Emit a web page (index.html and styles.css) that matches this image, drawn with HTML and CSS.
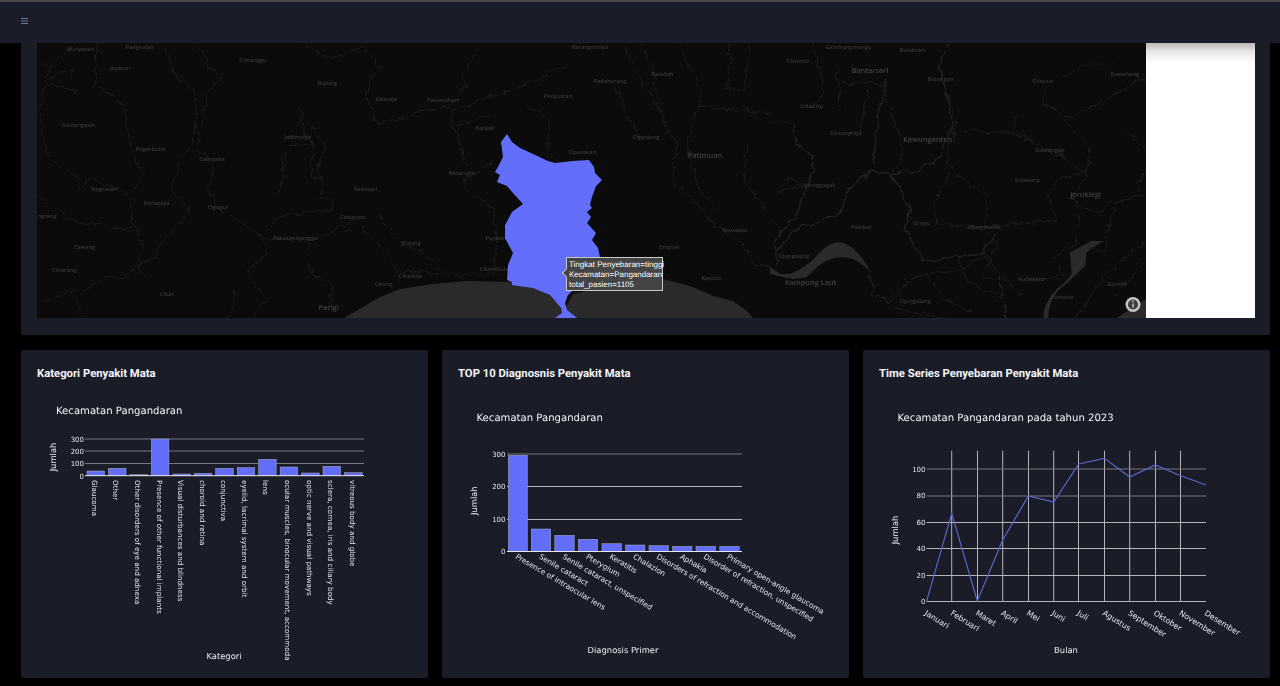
FILE: index.html
```html
<!DOCTYPE html>
<html lang="id">
<head>
<meta charset="utf-8">
<title>Dashboard Penyakit Mata</title>
<link rel="stylesheet" href="styles.css">
</head>
<body>
<header class="navbar">
  <svg class="burger" width="7" height="6" viewBox="0 0 7 6"><path d="M0 .5H7M0 3H7M0 5.5H7"/></svg>
</header>
<main class="content">
  <section class="card map-card">
    <div class="map-row">
      <div class="map">
        <svg class="map-svg" width="1109" height="275" viewBox="37 43 1109 275">
          <defs>
            <filter id="wiggle" x="-5%" y="-5%" width="110%" height="110%">
              <feTurbulence type="fractalNoise" baseFrequency="0.035" numOctaves="3" seed="4"/>
              <feDisplacementMap in="SourceGraphic" scale="26" xChannelSelector="R" yChannelSelector="G"/>
            </filter>
          </defs>
          <rect class="water-bg" x="37" y="43" width="1109" height="275"/>
          <g transform="translate(37 44) scale(.33333)">
            <path class="road" d="M0 62L40 62L90 25L100 12M40 62L30 100L8 180L12 260L40 350L120 395L130 430L170 400L190 420L240 430L280 470L285 530L300 570L320 605L300 650L265 700L210 700L140 740L100 740L20 775M40 100L70 85L105 80L100 105M40 115L125 145M180 0L175 125L260 180L280 300L300 370L320 385L290 440M385 10L410 90L470 140L480 240L470 295L430 340L405 440L455 490L440 520L400 570L360 610L360 640L300 660L330 710M480 0L520 70L555 100L515 140L500 200L490 260L480 320L530 360L510 440L540 490L600 530L680 580L690 630L630 680L660 730L690 770L650 815M790 190L795 240L830 310L820 400L860 410L855 450M815 230L865 310L840 380L860 410M780 240L830 300L760 305L735 340L745 410L720 450M0 460L60 500L110 530L200 545L230 560L280 550M100 740L135 790L135 820M670 590L720 520L790 505L885 500L885 465L840 465M680 580L815 590L815 680L890 725L880 790M830 590L950 525L1010 590L1060 630L1090 710M950 525L930 570M1030 510L1050 550L1110 590M1000 100L1035 70L980 10L880 45L790 0M1000 100L990 160L1020 235L1110 220M590 740L585 800L570 820"/>
            <text class="lbl" x="132" y="20">Mulyasari</text><text class="lbl" x="308" y="16">Pangkalan</text><text class="lbl" x="250" y="77">Jayasari</text><text class="lbl" x="648" y="53">Cimanggu</text><text class="lbl" x="871" y="123">Bojong</text><text class="lbl" x="1047" y="171">Kalipaja</text><text class="lbl" x="125" y="248">Sindangasih</text><text class="lbl" x="341" y="322">Pagerbumi</text><text class="lbl" x="782" y="285">Jadimulya</text><text class="lbl" x="525" y="352">Campaka</text><text class="lbl" x="203" y="442">Negrasari</text><text class="lbl" x="986" y="441">Sekosari</text><text class="lbl" x="359" y="482">Kertajaya</text><text class="lbl" x="543" y="496">Cigugur</text><text class="lbl" x="948" y="525">Cintaratu</text><text class="lbl" x="775" y="588">Parakanmanggu</text><text class="lbl" x="143" y="615">Tawang</text><text class="lbl" x="82" y="685">Ciherang</text><text class="lbl" x="390" y="755">Cikar</text><text class="lbl-lg" x="875" y="798">Parigi</text><text class="lbl" x="1040" y="725">Citeng</text><text class="lbl" x="30" y="523">ngreng</text>
          </g>
          <g transform="translate(400 44) scale(.33333)">
            <path class="road" d="M230 30L190 90L200 130L150 190L60 200L0 230M150 190L160 240L180 300L200 370M500 60L350 130L150 200M380 185L450 230L440 330L470 350M160 250L270 210M280 350L200 400L190 430L280 490L290 590L280 690M0 600L60 620L130 680M670 0L700 70L770 180L830 300L815 410L880 470L940 540L1030 600L1060 660L1110 670M720 0L740 30L760 90L800 270M840 0L910 160L880 230L860 310L900 440L950 500M650 130L680 220L730 290M900 190L1030 200L1110 210M990 0L980 130L1030 140L1050 0M1040 300L1030 410L1100 500M0 680L130 690L330 690"/>
            <text class="lbl" x="128" y="173">Pasawahan</text><text class="lbl" x="474" y="163">Penyutran</text><text class="lbl" x="630" y="116">Padaherang</text><text class="lbl" x="570" y="16">Karangmulya</text><text class="lbl" x="787" y="97">Paledah</text><text class="lbl" x="256" y="258">Kalijati</text><text class="lbl" x="738" y="286">Ciganjeng</text><text class="lbl" x="547" y="330">Ciparakan</text><text class="lbl-lg" x="915" y="343">Patimuan</text><text class="lbl" x="185" y="393">Kedarulin</text><text class="lbl" x="34" y="603">Bojong</text><text class="lbl" x="288" y="589">Pajaten</text><text class="lbl" x="808" y="614">Emplak</text><text class="lbl" x="1005" y="563">Rawaapu</text><text class="lbl" x="30" y="702">Cibenda</text><text class="lbl" x="288" y="682">Cikembulan</text><text class="lbl" x="934" y="708">Kaputo</text>
          </g>
          <g transform="translate(770 44) scale(.33333)">
            <path class="land" d="M0 670L30 690L60 690Q110 670 140 635Q180 590 215 595Q265 610 305 690Q265 640 215 640Q170 640 130 680L110 700L70 705L40 700L0 690Z"/>
            <path class="land" d="M820 822C820 780 850 740 885 715L905 690L900 625L965 590L1000 592L970 610L950 625L945 665L920 690L885 722C860 740 835 770 835 822Z"/>
            <path class="land" d="M1040 822L1128 765V822Z"/>
            <path class="river" d="M20 670L15 590L80 510L120 400L130 340L80 300L75 240M690 700L700 790L712 822M20 620L70 560L210 510L240 430L300 385L360 390L420 490L405 560L460 650L640 630L670 570M360 395L400 380L430 385L510 340L550 240L520 120L510 60L540 0M310 360L320 260L345 120L350 100"/>
            <path class="road" d="M300 690L310 750L350 770L410 710L470 690L560 680L640 640L690 700M350 770L400 800L520 820M360 400L400 330L385 280L340 120L220 115M200 60L210 200M130 0L160 140L130 200M240 60L295 130L270 270M500 60L560 230L530 350L600 430L650 450M580 260L720 265L780 290L880 340L960 400M540 380L500 470L500 540L640 550L860 530L830 450L880 400L960 380M650 440L650 560L680 600L640 700L700 700M820 120L820 180L900 220L1000 170L1130 100M870 100L950 60L1030 60M890 240L960 310L950 400L910 450L920 490L1000 500L1020 480L1128 450M925 510L920 600L850 640L880 690M1030 490L1000 620L960 610M1128 590L1000 700L920 820M1128 650L1030 760M1100 450L1128 360M1060 260L1128 310M0 240L70 240M50 400L100 430L20 440M410 710L360 780M730 690L810 710L880 690M0 520L20 540M740 220L730 260L790 290M560 640L600 720L700 760M470 690L520 760L600 800M640 630L760 760"/>
            <text class="lbl" x="235" y="16">Gandrungmangu</text><text class="lbl" x="427" y="24">Bulaksari</text><text class="lbl" x="85" y="58">Cisumur</text><text class="lbl-lg" x="300" y="87">Bantarsari</text><text class="lbl" x="512" y="110">Binangun</text><text class="lbl" x="818" y="117">Citepus</text><text class="lbl" x="1065" y="97">Rawaheng</text><text class="lbl" x="125" y="192">Sidaurip</text><text class="lbl" x="227" y="273">Cintungraja</text><text class="lbl-lg" x="473" y="293">Kawunganten</text><text class="lbl" x="840" y="323">Slawangan</text><text class="lbl" x="773" y="414">Sidasurip</text><text class="lbl" x="148" y="428">Ujunggagak</text><text class="lbl-lg" x="947" y="460">Jeruklegi</text><text class="lbl" x="455" y="543">Grugu</text><text class="lbl" x="642" y="554">Ujungmanik</text><text class="lbl" x="273" y="554">Penikel</text><text class="lbl" x="72" y="642">Ujungalang</text><text class="lbl-lg" x="122" y="723">Kampung Laut</text><text class="lbl" x="784" y="711">Kutawaru</text><text class="lbl" x="1042" y="726">Gumilir</text><text class="lbl" x="876" y="766">Lomanis</text><text class="lbl" x="436" y="776">Ujungalang</text>
          </g>
          <path class="land" d="M344 318L380 297L400 289L433 284L467 281L510 282L540 287L557 301L562 311L566 307L573 294L600 288L663 279L693 287L713 296L733 301L747 311L753 318Z"/>
          <path class="region" d="M507 134L512 142L520 148L533 154L548 161L555 163L573 161L589 160L594 167L595 173L602 180L596 186L592 197L590 205L592 208L587 212L591 217L587 223L596 233L592 240L598 248L600 257L595 275L585 285L573 290L568 295L565 303L567 310L577 318H555L562 313L561 308L550 295L533 288L512 285V282L507 280L508 265L513 253L505 238V225L512 212L523 204L513 193L507 186L497 182L500 175L495 172L499 165L503 157L501 142Z"/>
          <circle class="info-ring" cx="1133" cy="304.5" r="7.5"/>
          <circle class="info-core" cx="1133" cy="304.5" r="5"/>
          <path class="info-i" d="M1133 300.6v1.6M1133 303.4v4"/>
        </svg>
        <div class="tooltip">
          <span>Tingkat Penyebaran=tinggi</span>
          <span>Kecamatan=Pangandaran</span>
          <span>total_pasien=1105</span>
        </div>
      </div>
      <div class="white-panel"></div>
    </div>
  </section>

  <section class="chart-row">
    <article class="card chart-card">
      <h2 class="chart-heading">Kategori Penyakit Mata</h2>
      <svg class="chart" width="407" height="297" viewBox="21 381 407 297">
        <text class="plot-title" x="56" y="414">Kecamatan Pangandaran</text>
        <path class="grid" d="M85 439H364M85 451H364M85 463.5H364"/>
        <g class="bars">
          <rect x="87" y="471" width="17.6" height="4.7"/><rect x="108.4" y="468.3" width="17.6" height="7.4"/><rect x="129.9" y="474.7" width="17.6" height="1"/><rect x="151.3" y="439" width="17.6" height="36.7"/><rect x="172.8" y="474" width="17.6" height="1.7"/><rect x="194.3" y="473.3" width="17.6" height="2.4"/><rect x="215.7" y="468.3" width="17.6" height="7.4"/><rect x="237.2" y="467.7" width="17.6" height="8"/><rect x="258.6" y="459.3" width="17.6" height="16.4"/><rect x="280.1" y="467" width="17.6" height="8.7"/><rect x="301.6" y="473" width="17.6" height="2.7"/><rect x="323" y="466.3" width="17.6" height="9.4"/><rect x="344.5" y="472.7" width="17.6" height="3"/>
        </g>
        <path class="zero" d="M85 475.7H364"/>
        <g class="tick tick-end">
          <text x="84" y="442">300</text><text x="84" y="454">200</text><text x="84" y="466">100</text><text x="84" y="478.5">0</text>
        </g>
        <text class="axis-title" transform="translate(56 457) rotate(-90)">Jumlah</text>
        <g class="tick tick-side">
          <text transform="translate(92 480) rotate(90)">Glaucoma</text>
          <text transform="translate(113 480) rotate(90)">Other</text>
          <text transform="translate(135 480) rotate(90)">Other disorders of eye and adnexa</text>
          <text transform="translate(156.5 480) rotate(90)">Presence of other functional implants</text>
          <text transform="translate(177.5 480) rotate(90)">Visual disturbances and blindness</text>
          <text transform="translate(199.5 480) rotate(90)">choroid and retina</text>
          <text transform="translate(220.5 480) rotate(90)">conjunctiva</text>
          <text transform="translate(242 480) rotate(90)">eyelid, lacrimal system and orbit</text>
          <text transform="translate(263 480) rotate(90)">lens</text>
          <text transform="translate(285 480) rotate(90)">ocular muscles, binocular movement, accommoda</text>
          <text transform="translate(306.5 480) rotate(90)">optic nerve and visual pathways</text>
          <text transform="translate(327.5 480) rotate(90)">sclera, cornea, iris and ciliary body</text>
          <text transform="translate(349.5 480) rotate(90)">vitreous body and globe</text>
        </g>
        <text class="axis-title" x="224" y="659">Kategori</text>
      </svg>
    </article>

    <article class="card chart-card">
      <h2 class="chart-heading">TOP 10 Diagnosnis Penyakit Mata</h2>
      <svg class="chart" width="407" height="297" viewBox="442 381 407 297">
        <text class="plot-title" x="476.5" y="421">Kecamatan Pangandaran</text>
        <path class="grid" d="M507 454H742"/>
        <path class="grid-light" d="M507 486.5H742M507 519.5H742"/>
        <g class="bars">
          <rect x="508.3" y="455.3" width="19" height="96"/><rect x="531.3" y="529" width="19.4" height="22.3"/><rect x="554.8" y="535.3" width="19.4" height="16"/><rect x="578.3" y="539.3" width="19.4" height="12"/><rect x="602" y="543.7" width="19.4" height="7.6"/><rect x="625.5" y="545" width="19.4" height="6.3"/><rect x="649" y="545.7" width="19.4" height="5.6"/><rect x="672.5" y="546.3" width="19.4" height="5"/><rect x="696" y="546.3" width="19.4" height="5"/><rect x="719.8" y="546.3" width="19.4" height="5"/>
        </g>
        <path class="zero" d="M507 551.5H742"/>
        <g class="tick tick-end">
          <text x="505.5" y="457">300</text><text x="505.5" y="489">200</text><text x="505.5" y="522">100</text><text x="505.5" y="554">0</text>
        </g>
        <text class="axis-title" transform="translate(477 500.7) rotate(-90)">Jumlah</text>
        <g class="tick tick-wide">
          <text transform="translate(515 558) rotate(30.5)">Presence of intraocular lens</text>
          <text transform="translate(538.5 558) rotate(30.5)">Senile cataract</text>
          <text transform="translate(562 558) rotate(30.5)">Senile cataract, unspecified</text>
          <text transform="translate(585.5 558) rotate(30.5)">Pterygium</text>
          <text transform="translate(609 558) rotate(30.5)">Keratitis</text>
          <text transform="translate(632.5 558) rotate(30.5)">Chalazion</text>
          <text transform="translate(656 558) rotate(30.5)">Disorders of refraction and accommodation</text>
          <text transform="translate(679.5 558) rotate(30.5)">Aphakia</text>
          <text transform="translate(703 558) rotate(30.5)">Disorder of refraction, unspecified</text>
          <text transform="translate(726.5 558) rotate(30.5)">Primary open-angle glaucoma</text>
        </g>
        <text class="axis-title" x="623" y="652.5">Diagnosis Primer</text>
      </svg>
    </article>

    <article class="card chart-card">
      <h2 class="chart-heading">Time Series Penyebaran Penyakit Mata</h2>
      <svg class="chart" width="407" height="297" viewBox="863 381 407 297">
        <text class="plot-title" x="897.5" y="421">Kecamatan Pangandaran pada tahun 2023</text>
        <path class="grid-light" d="M951.7 450.7V601.7M977.5 450.7V601.7M1002.7 450.7V601.7M1028.5 450.7V601.7M1053.7 450.7V601.7M1078.5 450.7V601.7M1104.5 450.7V601.7M1129.7 450.7V601.7M1155.5 450.7V601.7M1180.5 450.7V601.7"/>
        <path class="grid" d="M926.5 469H1206M926.5 496H1206"/>
        <path class="grid-light" d="M926.5 522.5H1206M926.5 548.5H1206M926.5 575.5H1206M926.5 601.5H1206"/>
        <polyline class="series" points="926.5,601.7 951.7,513.3 977.3,601 1002.7,540 1028.3,496 1053.7,502 1078.7,464 1104.3,458.3 1129.7,477 1155.3,465 1180.7,475.7 1206,485"/>
        <g class="tick tick-end">
          <text x="925.5" y="471.5">100</text><text x="925.5" y="498">80</text><text x="925.5" y="525">60</text><text x="925.5" y="551">40</text><text x="925.5" y="578">20</text><text x="925.5" y="604">0</text>
        </g>
        <text class="axis-title" transform="translate(898 530) rotate(-90)">Jumlah</text>
        <g class="tick tick-month">
          <text transform="translate(924 614.5) rotate(32)">Januari</text>
          <text transform="translate(950 614.5) rotate(32)">Februari</text>
          <text transform="translate(975 614.5) rotate(32)">Maret</text>
          <text transform="translate(1000.5 614.5) rotate(32)">April</text>
          <text transform="translate(1026 614.5) rotate(32)">Mei</text>
          <text transform="translate(1051 614.5) rotate(32)">Juni</text>
          <text transform="translate(1076.5 614.5) rotate(32)">Juli</text>
          <text transform="translate(1102 614.5) rotate(32)">Agustus</text>
          <text transform="translate(1127.5 614.5) rotate(32)">September</text>
          <text transform="translate(1153 614.5) rotate(32)">Oktober</text>
          <text transform="translate(1178.5 614.5) rotate(32)">November</text>
          <text transform="translate(1204 614.5) rotate(32)">Desember</text>
        </g>
        <text class="axis-title" x="1066" y="652.5">Bulan</text>
      </svg>
    </article>
  </section>
</main>
</body>
</html>
```
FILE: styles.css
```css
* { box-sizing: border-box; }
html, body { margin: 0; height: 100%; }
body {
  background: #000;
  overflow: hidden;
  display: flex;
  flex-direction: column;
  height: 686px;
}
.navbar {
  height: 43px;
  flex: none;
  background: #1a1d29;
  border-top: 2px solid #4a4a4c;
  display: flex;
  align-items: center;
  padding-left: 21px;
  padding-bottom: 3px;
}
.burger path { stroke: #6d7794; stroke-width: 1; fill: none; }
.content {
  flex: 1;
  padding: 0 10px 8px 21px;
  display: flex;
  flex-direction: column;
  gap: 15px;
}
.card { background: #1a1d28; border-radius: 0 0 2px 2px; }
.map-card { height: 292px; padding: 0 15px 17px 16px; }
.map-row { display: flex; height: 275px; }
.map { position: relative; width: 1109px; height: 275px; }
.map-svg { display: block; filter: blur(.35px); }
.white-panel {
  width: 109px;
  background: linear-gradient(#b8b8ba 0, #e9e9ea 9px, #fff 20px);
}
.water-bg { fill: #0b0b0c; }
.land { fill: #2a2a2a; }
.road { fill: none; stroke: #1c1c1d; stroke-width: 3; filter: url(#wiggle); }
.river { fill: none; stroke: #212122; stroke-width: 4.5; filter: url(#wiggle); }
.lbl, .lbl-lg {
  font-family: "Open Sans", sans-serif;
  font-weight: 600;
  text-anchor: middle;
  fill: #383839;
}
.lbl { font-size: 17px; }
.lbl-lg { font-size: 22px; fill: #414142; }
.region { fill: #636efa; }
.info-ring { fill: #c4c4c4; }
.info-core { fill: #3d3d3d; }
.info-i { stroke: #c4c4c4; stroke-width: 1.5; fill: none; }
.tooltip {
  position: absolute;
  left: 529px;
  top: 214px;
  width: 97px;
  height: 34px;
  padding: 2px 0 0 2px;
  background: #444;
  border: 1px solid #c8c8c8;
  display: flex;
  flex-direction: column;
  font: 8px/10.2px "Liberation Sans", Arial, sans-serif;
  color: #fff;
  white-space: nowrap;
  text-rendering: geometricPrecision;
}
.tooltip::before {
  content: "";
  position: absolute;
  left: -4px;
  top: 12px;
  width: 5px;
  height: 5px;
  background: #444;
  border-left: 1px solid #c8c8c8;
  border-bottom: 1px solid #c8c8c8;
  transform: rotate(45deg);
}
.chart-row {
  display: grid;
  grid-template-columns: repeat(3, 407px);
  gap: 14px;
  height: 328px;
}
.chart-card { border-radius: 2px; padding-top: 16px; }
.chart-heading {
  margin: 0 0 0 16px;
  height: 15px;
  font: 700 11.3px/15px Roboto, sans-serif;
  color: #f4f6f9;
  text-rendering: geometricPrecision;
}
.chart { display: block; filter: blur(.25px); }
.chart text { font-family: "DejaVu Sans", Verdana, sans-serif; text-rendering: geometricPrecision; }
.plot-title { font-size: 10.1px; fill: #f2f5fa; }
.grid { fill: none; stroke: #77777e; stroke-width: 1; }
.grid-light { fill: none; stroke: #b4b4ba; stroke-width: 1; }
.zero { fill: none; stroke: #e6e7ec; stroke-width: 1; }
.bars rect { fill: #636efa; stroke: #a9adbd; stroke-width: .5; }
.tick text { font-size: 7px; fill: #e4e7ee; }
.tick-end text { text-anchor: end; }
.tick-side text { font-size: 7.15px; }
.tick-wide text { font-size: 7.4px; }
.tick-month text { font-size: 7.8px; }
.axis-title { font-size: 8.4px; fill: #eceff4; text-anchor: middle; }
.series { fill: none; stroke: #5d65cc; stroke-width: 1.2; }
```
